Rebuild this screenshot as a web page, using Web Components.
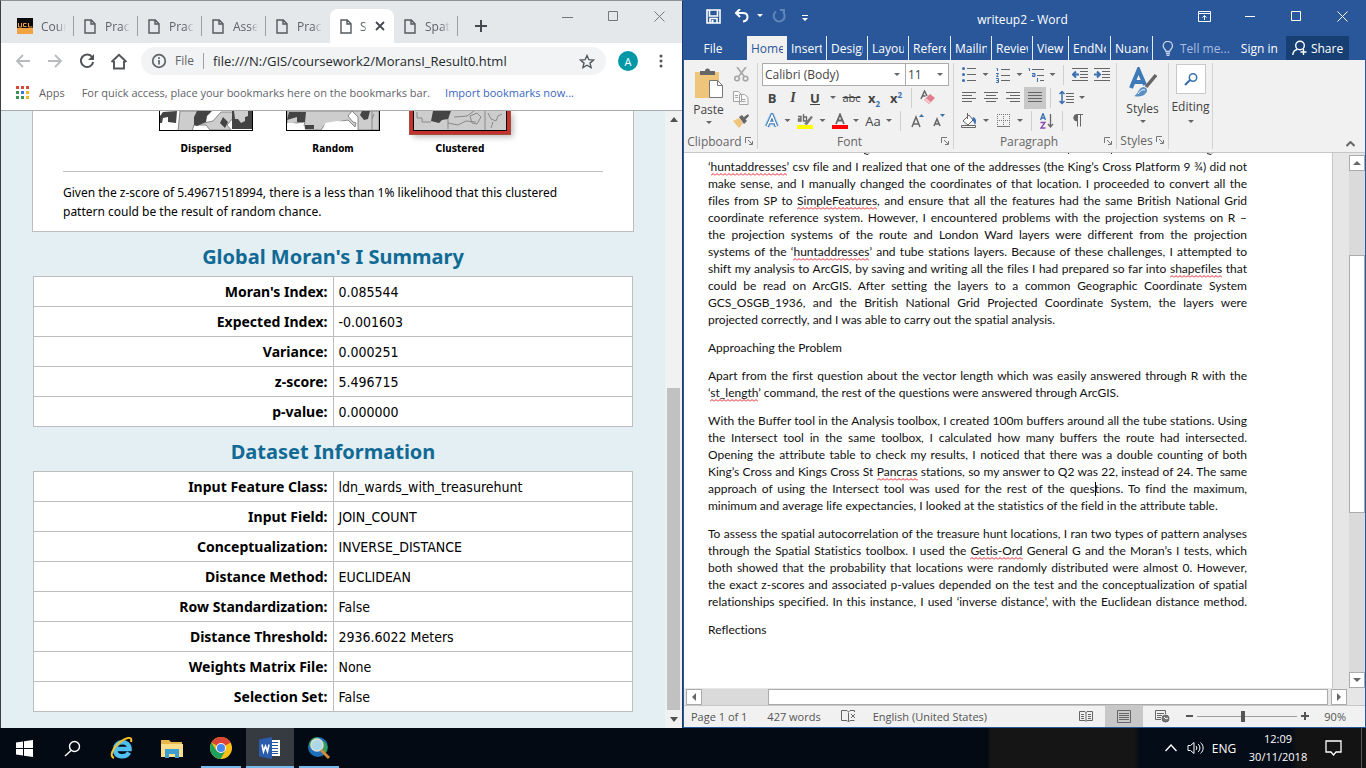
<!DOCTYPE html>
<html lang="en">
<head>
<meta charset="utf-8">
<title>Desktop</title>
<style>
html,body{margin:0;height:100%}
body{overflow:hidden;font-family:"Open Sans","Noto Sans",sans-serif;font-size:12px}
</style>
</head>
<body>
<desktop-screen>
  <browser-window slot="window"></browser-window>
  <word-window slot="window"></word-window>
  <task-bar slot="bar"></task-bar>
</desktop-screen>
<script>
const BASE = `*{box-sizing:border-box}button{font:inherit;color:inherit;background:none;border:0;padding:0;margin:0;display:flex;align-items:center;justify-content:center}svg{display:block;flex:none}a{color:inherit;text-decoration:none}p{margin:0}`;
function define(name, css, html){
  const t = document.createElement('template');
  t.innerHTML = `<style>${BASE}${css}</style>${html}`;
  customElements.define(name, class extends HTMLElement{
    constructor(){ super(); this.attachShadow({mode:'open'}).append(t.content.cloneNode(true)); }
  });
}

define('desktop-screen', `
:host{display:flex;flex-direction:column;height:100vh;background:#04090f}
.windows{display:flex;flex:1;min-height:0}
::slotted([slot=window]){flex:1;min-width:0}
`, `<div class="windows"><slot name="window"></slot></div><slot name="bar"></slot>`);

/* ---------- browser ---------- */
define('browser-tab', `
:host{display:block;flex:0 1 64px;min-width:0;height:34px;color:#5f6368}
button{width:100%;height:100%;padding:0 7px 0 10px;gap:9px;justify-content:flex-start;border-right:1px solid #9b9fa3;height:20px;margin-top:7px}
.t{overflow:hidden;white-space:nowrap;flex:1;text-align:left;mask-image:linear-gradient(90deg,#000 65%,transparent)}
.x{display:none}
:host([first]) button{padding-left:7px;gap:8px}
:host([noline]) button{border-color:transparent}
:host([active]){background:#fff;border-radius:8px 8px 0 0}
:host([active]) button{border-color:transparent;gap:8px}
:host([active]) .x{display:block;margin-right:1px}
`, `<button role="tab"><slot name="icon"><svg width="12" height="15" viewBox="0 0 12 15" fill="none" stroke="#55595d" stroke-width="1.4"><path d="M1 1h6.2L11 4.8V14H1zM7 1v4h4"/></svg></slot><span class="t"><slot></slot></span><svg class="x" width="10" height="10" viewBox="0 0 10 10" stroke="#45494d" stroke-width="1.8"><path d="M1 1l8 8M9 1l-8 8"/></svg></button>`);

define('browser-toolbar', `
:host{display:flex;flex-direction:column;background:#fff}
.bar{display:flex;align-items:center;height:36px;padding:0 12px 0 6px}
.bar button{width:32px;height:28px}
.box{display:flex;align-items:center;flex:1;height:28px;border-radius:14px;background:#f1f3f4;margin:0 12px 0 6px;padding:0 9px 0 10px;color:#5f6368}
.box span{padding:0 9px 0 8px;border-right:1px solid #9aa0a6;line-height:16px}
.box input{flex:1;min-width:0;border:0;background:none;outline:0;font:13px "Open Sans",sans-serif;color:#26292c;padding:0 0 0 9px}
.box button{width:20px}
.bar .me{width:20px;height:20px;border-radius:50%;background:#0097a7;color:#fff;font-size:11px}
.bar .more{width:18px;margin-left:14px}
.marks{display:flex;align-items:center;height:32px;padding:0 0 4px 15px;color:#5f6368;border-bottom:1px solid #a9abad;white-space:nowrap;font-size:11px}
.marks button{gap:10px;margin-right:17px;font-size:11px}
.marks a{color:#3a67c4;margin-left:15px}
`, `<div class="bar">
<button aria-label="Back"><svg width="16" height="14" viewBox="0 0 16 14" fill="none" stroke="#b9bbbe" stroke-width="1.8"><path d="M15 7H2M8 1L2 7l6 6"/></svg></button>
<button aria-label="Forward"><svg width="16" height="14" viewBox="0 0 16 14" fill="none" stroke="#b9bbbe" stroke-width="1.8"><path d="M1 7h13M8 1l6 6-6 6"/></svg></button>
<button aria-label="Reload"><svg width="16" height="16" viewBox="0 0 16 16" fill="none" stroke="#505458" stroke-width="2"><path d="M13.2 4.2A6.2 6.2 0 1 0 14.2 9"/><path d="M15 1v6H9z" fill="#505458" stroke="none"/></svg></button>
<button aria-label="Home"><svg width="18" height="17" viewBox="0 0 18 17" fill="none" stroke="#505458" stroke-width="1.9"><path d="M1.5 9L9 1.8 16.500 9M4 8v7.500h10V8"/></svg></button>
<div class="box"><svg width="16" height="16" viewBox="0 0 16 16" fill="none" stroke="#5f6368" stroke-width="1.7"><circle cx="8" cy="8" r="6.300"/><path d="M8 7v4.500M8 4.200v1.700"/></svg><span>File</span><input aria-label="Address" value="file:///N:/GIS/coursework2/MoransI_Result0.html"><button aria-label="Bookmark"><svg width="16" height="15" viewBox="0 0 16 15" fill="none" stroke="#55595d" stroke-width="1.400"><path d="M8 1.500l1.900 4.200 4.600.4-3.500 3 1.100 4.500L8 11.200l-4.100 2.400L5 9.100l-3.500-3 4.600-.4z"/></svg></button></div>
<button class="me">A</button>
<button class="more" aria-label="Menu"><svg width="4" height="14" fill="#505458"><circle cx="2" cy="2" r="1.500"/><circle cx="2" cy="7" r="1.500"/><circle cx="2" cy="12" r="1.500"/></svg></button>
</div>
<div class="marks"><button><svg width="13" height="13"><g fill="#d8483b"><path d="M0 0h3v3H0zM5 0h3v3H5zM10 0h3v3h-3z"/></g><path d="M0 5h3v3H0zM0 10h3v3H0zM5 10h3v3H5z" fill="#3d9256"/><path d="M5 5h3v3H5z" fill="#3d78e0"/><path d="M10 5h3v3h-3zM10 10h3v3h-3z" fill="#f0b429"/></svg>Apps</button><span>For quick access, place your bookmarks here on the bookmarks bar.</span><a href="#">Import bookmarks now...</a></div>`);

define('pattern-map', `
:host{display:flex;flex-direction:column;align-items:center;width:127px}
.m{border:1px solid #000;border-top:0;height:20px;width:94px;overflow:hidden}
.frame{height:34px}
:host([hot]) .frame{height:23px;border:3px solid #c4322f;border-top:0;outline:1px solid #a5503c;clip-path:inset(0 -12px -12px -12px);box-shadow:3px 3px 6px #bbb;margin-bottom:11px}
b{font:bold 10px/14px "DejaVu Sans Condensed",sans-serif;margin-top:-3px}
`, `<div class="frame"><div class="m"><slot name="map"></slot></div></div><b><slot></slot></b>`);

define('report-table', `
:host{display:block;margin:0 1px}
h2{margin:0;text-align:center;font:bold 20px/48px "Noto Sans",sans-serif;color:#116a94;padding-top:1px;height:44px}
table{width:100%;border-collapse:collapse;background:#fff;table-layout:fixed}
td,th{border:1px solid #bdbdbd;height:30px;padding:0 5px;font-size:14px;line-height:20px}
th{text-align:right;font-weight:bold;font-family:"Noto Sans",sans-serif}
td{font-family:"DejaVu Sans Condensed",sans-serif}
`, `<h2></h2><table><tbody></tbody></table>`);

define('report-page', `
:host{display:flex;flex:1;min-height:0;background:#e4eff4;overflow:hidden}
.page{flex:1;min-width:0;padding:0 31px}
.card{background:#fff;border:1px solid #bdbdbd;border-top:0;height:121px;padding:0 30px}
.maps{display:flex;justify-content:center;height:61px;border-bottom:1px solid #c0c0c0}
.card p{padding-top:11px;font:12px/19px "Noto Sans",sans-serif;white-space:nowrap}
.sb{width:17px;flex:none;background:#f1f1f1;display:flex;flex-direction:column;align-items:center}
.sb button{height:17px;width:17px}
.thumb{width:13px;height:322px;background:#c1c1c1;margin-top:260px}
.gap{flex:1}
`, `<div class="page"><div class="card"><div class="maps">
<pattern-map><svg slot="map" width="92" height="19"><path fill="#fff" d="M0 0h92v19H0z"/><path fill="#cdcdcd" stroke="#888" d="M20 0h22l-6 8 8 4 9-2 8-9h13v5l-7 8 4 5H50l-4-5H34l-2 6H18z"/><path fill="#444" d="M3 1l14-1-1 12-8-1v-5l-5 1-1 5H0V5zM37 0h15l-5 5-1 6-9 4-3-1V6zM63 6l5 5-3 6-5-5zM72 0h20v18H72z"/><path fill="#cdcdcd" d="M74 0h14v5l-3 1v4l-4 2-3-4h-3z"/></svg>Dispersed</pattern-map>
<pattern-map><svg slot="map" width="92" height="19"><path fill="#cdcdcd" stroke="#888" d="M0 0h92v19H71V6l-6-6-4 5 5 6 3 1-1 4-7-7-6 1-7 4-10-1-4 6H16l2-8-18 2z"/><path fill="#fff" d="M0 12h7l5 2 5 1 1 4H0zM38 12l12-2 12 1v8H36z"/><path fill="#444" d="M2 1h17l-1 10h-8V6L0 9zM18 14h9v4h-9zM75 0h8l-2 8-4 1-4-5z"/><path fill="none" stroke="#888" d="M85 0v19M87 3l-2 5"/></svg>Random</pattern-map>
<pattern-map hot><svg slot="map" width="92" height="19"><path fill="#cdcdcd" d="M0 0h92v19H0z"/><path fill="none" stroke="#898989" d="M3 1v6h5v4h9M34 18V0M34 12l10 2 8-4 10 1M71 0v19M40 6l13-1 7-5M63 2l4 4-4 7-5-1-2-7zM74 2l3 6 5 2 2-5 4-2M79 11l-2 6"/><path fill="#444" d="M19 0h18l-3 8-6 1-3 3-8-2z"/></svg>Clustered</pattern-map>
</div><p>Given the z-score of 5.49671518994, there is a less than 1% likelihood that this clustered<br>pattern could be the result of random chance.</p></div>
<report-table data-title="Global Moran's I Summary" data-rows="Moran's Index:|0.085544;Expected Index:|-0.001603;Variance:|0.000251;z-score:|5.496715;p-value:|0.000000"></report-table>
<report-table data-title="Dataset Information" data-rows="Input Feature Class:|ldn_wards_with_treasurehunt;Input Field:|JOIN_COUNT;Conceptualization:|INVERSE_DISTANCE;Distance Method:|EUCLIDEAN;Row Standardization:|False;Distance Threshold:|2936.6022 Meters;Weights Matrix File:|None;Selection Set:|False"></report-table>
</div><div class="sb"><button aria-label="Scroll up"><svg width="8" height="5" fill="#505050"><path d="M0 5l4-5 4 5z"/></svg></button><div class="thumb"></div><div class="gap"></div><button aria-label="Scroll down"><svg width="8" height="5" fill="#505050"><path d="M0 0h8L4 5z"/></svg></button></div>`);

define('browser-window', `
:host{display:flex;flex-direction:column;background:#fff;box-sizing:border-box;border:1px solid #3c4043;border-top-color:#8f9295;border-right:1px solid #1d3a6b;border-bottom:0}
.strip{display:flex;height:42px;background:#e5e8eb;padding:8px 0 0 9px}
.tabs{display:flex;flex:0 1 449px;min-width:0}
.new{width:40px;height:34px;margin-left:2px}
.ctl{display:flex;margin-left:auto;margin-top:-7px}
.ctl button{width:46px;height:28px}
`, `<div class="strip"><div class="tabs" role="tablist">
<browser-tab first><svg slot="icon" width="16" height="16"><path fill="#0a0a0a" d="M0 0h16v10H0z"/><path fill="#f2a344" d="M0 10h16v6H0z"/><path fill="none" stroke="#f2a344" d="M1.500 5v4h3V5M9.500 5.500h-3v3h3M11.500 5v4h4"/></svg>Cour</browser-tab>
<browser-tab>Prac</browser-tab><browser-tab>Prac</browser-tab><browser-tab>Asse</browser-tab><browser-tab noline>Prac</browser-tab><browser-tab active>S</browser-tab><browser-tab>Spat</browser-tab></div>
<button class="new" aria-label="New tab"><svg width="12" height="12" stroke="#45494d" stroke-width="2"><path d="M6 0v12M0 6h12"/></svg></button>
<div class="ctl"><button aria-label="Minimise"><svg width="11" height="11" stroke="#777"><path d="M0 6.500h11"/></svg></button><button aria-label="Maximise"><svg width="11" height="11" fill="none" stroke="#777"><path d="M.5.5h9v9h-9z"/></svg></button><button aria-label="Close"><svg width="11" height="11" stroke="#777"><path d="M.5.5l10 10M10.500.5l-10 10"/></svg></button></div></div>
<browser-toolbar></browser-toolbar><report-page></report-page>`);

/* ---------- word processor ---------- */
define('word-tab', `
:host{display:block;flex:0 1 var(--w,41px);min-width:0;height:24px;color:#fff}
button{width:100%;height:24px;justify-content:flex-start;padding:0 4px;border-right:1px solid #e6ecf5}
span{overflow:hidden;white-space:nowrap;flex:1;text-align:left}
:host([active]) button{background:#f1f1f1;color:#2a579a;border:0}
`, `<button role="tab"><span><slot></slot></span></button>`);

define('word-titlebar', `
:host{display:block;background:#2a579a;color:#fff;white-space:nowrap}
.top{display:grid;grid-template-columns:1fr auto 1fr;height:36px;align-items:center}
.top>span{margin-right:4px;padding-top:2px}
.qat{display:flex;padding-left:15px;margin-top:-4px}
.qat button,.ctl button{height:28px}
.ctl{display:flex;justify-content:flex-end;margin-top:-4px}
.ctl button{width:46px}
.tabs{display:flex;height:24px}
.file{width:63px;padding-right:5px}
.strip{display:flex;flex:0 1 407px;min-width:0}
.tell{gap:6px;color:#a9bde0;margin-left:8px}
.sign{margin-left:11px}
.share{background:#173f73;width:63px;gap:4px;margin:0 16px 0 auto}
`, `<div class="top"><div class="qat">
<button style="width:28px" aria-label="Save"><svg width="15" height="15" fill="none" stroke="#fff" stroke-width="1.600"><path d="M1 1h13v13H1zM3.500 1v6h8V1M4 14v-4.500h7V14"/><path d="M6.500 11v3" stroke-width="2"/></svg></button>
<button style="width:30px" aria-label="Undo"><svg width="16" height="14" fill="none" stroke="#fff" stroke-width="2"><path d="M6 0L2 4l4 4M2.500 4H9c6 0 6 8 0 8.500"/></svg></button>
<svg width="6" height="4" style="align-self:center" fill="#fff"><path d="M0 0h6L3 3z"/></svg>
<button style="width:32px" aria-label="Repeat"><svg width="14" height="14" fill="none" stroke="#6285bb" stroke-width="2"><path d="M4 2.500A5.500 5.500 0 1 0 11 3M8 1h4v4"/></svg></button>
<button style="width:20px" aria-label="Customise"><svg width="6" height="8" fill="#fff" style="margin-top:5px"><path d="M0 0h6v1H0zM0 3h6L3 6z"/></svg></button></div>
<span>writeup2 - Word</span>
<div class="ctl"><button aria-label="Ribbon options"><svg width="13" height="11" fill="none" stroke="#fff"><path d="M.5.5h12v10H.5zM.5 2.500h12M6.500 9V4.500M4.500 6.500l2-2 2 2"/></svg></button><button aria-label="Minimise"><svg width="11" height="11" stroke="#fff"><path d="M0 5.500h10"/></svg></button><button aria-label="Maximise"><svg width="11" height="11" fill="none" stroke="#fff"><path d="M.5.5h9v9h-9z"/></svg></button><button aria-label="Close"><svg width="11" height="11" stroke="#fff"><path d="M.5.5l10 10M10.500.5l-10 10"/></svg></button></div></div>
<div class="tabs"><button class="file">File</button><div class="strip" role="tablist">
<word-tab active style="--w:40px">Home</word-tab><word-tab style="--w:40px">Insert</word-tab><word-tab>Design</word-tab><word-tab>Layou</word-tab><word-tab style="--w:42px">Refere</word-tab><word-tab>Mailin</word-tab><word-tab>Review</word-tab><word-tab style="--w:36px">View</word-tab><word-tab style="--w:42px">EndNo</word-tab><word-tab style="--w:42px">Nuanc</word-tab></div>
<button class="tell"><svg width="12" height="15" fill="none" stroke="#c8d6ec" stroke-width="1.300"><path d="M4 10.500C4 8.500 1.200 7.800 1.200 5a4.500 4.500 0 0 1 9.300 0c0 2.800-2.800 3.500-2.800 5.500zM4 12.500h4M4.500 14.300h3"/></svg>Tell me...</button><button class="sign">Sign in</button><button class="share"><svg width="15" height="16" fill="none" stroke="#fff" stroke-width="1.400"><circle cx="8" cy="5.500" r="4.300"/><path d="M.8 15c.2-3 2-5 4.500-5.500M11.500 9v6M8.500 12h6"/></svg>Share</button></div>`);

define('ribbon-group', `
:host{display:grid;grid-template-rows:1fr 18px;border-right:1px solid #d2d2d2;height:86px;margin-top:3px;color:#444;box-sizing:border-box}
.foot{display:grid;grid-template-columns:1fr auto;align-items:center;color:#666;padding-right:4px;white-space:nowrap}
.foot span{text-align:center}
:host([plain]) .foot{visibility:hidden}
`, `<slot></slot><div class="foot"><span><slot name="label"></slot></span><svg width="8" height="8" fill="none" stroke="#777"><path d="M.5 6V.5H6M3 3l4 4M7.500 4v3.500H4"/></svg></div>`);

const DD = w => `<svg width="${w}" height="4" viewBox="0 0 ${w} 4"><path fill="#666" d="M${w/2-3} 0h6l-3 3z"/></svg>`;
const B = (w,label,inner,cls='') => `<button class="${cls}" style="width:${w}px" aria-label="${label}">${inner}</button>`;
const SEP = w => `<i class="sep" style="width:${w}px"></i>`;
const LINES = (d) => `<svg width="14" height="11" fill="none" stroke="#666" ><path d="${d}"/></svg>`;

define('word-ribbon', `
:host{display:flex;background:#f1f1f1;height:93px;border-bottom:1px solid #c6c6c6;color:#444;box-sizing:border-box}
.rows{display:grid;grid-template-rows:23px 23px 23px}
.row{display:flex;align-items:center}
.row button{height:22px}
.sep{display:block;height:20px;background:linear-gradient(#cfcfcf,#cfcfcf) center/1px 100% no-repeat}
.on{background:#c8c8c8}
select{appearance:none;height:23px;border:1px solid #ababab;border-radius:0;background:#fff url('data:image/svg+xml,<svg xmlns="http://www.w3.org/2000/svg" width="6" height="4"><path fill="%23666" d="M0 0h6L3 3z"/></svg>') right 5px center no-repeat;font:12px "Open Sans",sans-serif;color:#444;padding:0 2px}
select+select{margin-left:-1px}
.clip{display:flex}
.big{flex-direction:column;justify-content:flex-start;gap:3px;line-height:16px;font-size:12px}
.col{display:grid;grid-template-rows:23px 23px 23px;width:24px}
.glass{width:30px;height:30px;background:#fff;border:1px solid #c8c8c8;display:flex;align-items:center;justify-content:center}
.up{align-self:flex-end;margin:0 9px 5px auto;width:12px}
b,u,s{font-size:13px;font-style:normal;line-height:18px}
sub,sup{font-size:8px;color:#3a70b0;line-height:0}
`, `
<ribbon-group style="width:74px"><div class="clip"><button class="big" style="width:49px;padding:5px 0 0 0"><svg width="30" height="31"><path fill="#eec57a" d="M1 4h24v26H1z"/><path fill="#666" d="M6 7V3h5a2.500 2.500 0 0 1 5 0h5v4z"/><path fill="#fff" stroke="#777" d="M15.500 12.500h8l5 5v12h-13z"/><path fill="none" stroke="#777" d="M23.500 12.500v5h5"/></svg>Paste${DD(8)}</button>
<div class="col">${B(16,'Cut','<svg width="15" height="15" fill="none" stroke="#a5a5a5" stroke-width="1.600"><path d="M3 0l7 9M12 0L5 9"/><circle cx="3" cy="11.500" r="2.300"/><circle cx="11.500" cy="11.500" r="2.300"/></svg>')}${B(16,'Copy','<svg width="16" height="14" fill="#f8f8f8" stroke="#a5a5a5"><path d="M.5.5h5l3 3v7h-8zM6.500 3.500h5l3.500 3v7H6.500zM2 4.500h3M2 6.500h3M8.500 8.500h4M8.500 10.500h4"/></svg>')}${B(16,'Format painter','<svg width="16" height="14"><path fill="#eec57a" d="M0 7l6-3 4 5-4 5z"/><path fill="#666" d="M6 3l3-2 5 6-3 3zM11 3l4-3 1 2-4 4z"/></svg>')}</div></div><span slot="label">Clipboard</span></ribbon-group>
<ribbon-group style="width:196px"><div class="rows" style="padding-left:4px"><div class="row"><select aria-label="Font" style="width:144px"><option>Calibri (Body)</option></select><select aria-label="Font size" style="width:44px"><option>11</option></select></div>
<div class="row">${B(20,'Bold','<b>B</b>')}${B(22,'Italic','<i style="font:italic bold 14px Liberation Serif">I</i>')}${B(22,'Underline','<u><b>U</b></u>')}${DD(14)}${B(23,'Strikethrough','<s style="font-size:11px">abc</s>')}${B(22,'Subscript','<b>x<sub>2</sub></b>')}${B(22,'Superscript','<b>x<sup>2</sup></b>')}${SEP(8)}${B(24,'Clear formatting','<svg width="15" height="15"><path fill="none" stroke="#666" stroke-width="1.500" d="M1 9L4.500 1 7 6M2.500 6h3"/><path fill="#e07c8c" d="M4 10l6-6 5 4-6 6z"/><path fill="#f5c4cb" d="M4 10l2-2 5 4-2 2z"/></svg>')}</div>
<div class="row">${B(20,'Text effects','<svg width="16" height="16" fill="none"><path stroke="#b5d5f0" stroke-width="5.500" d="M3 13.500l5-11 4.500 11M5 9.500h5"/><path stroke="#3d78b4" stroke-width="3.500" d="M3 13.500l5-11 4.500 11M5 9.500h5"/><path stroke="#fff" stroke-width="1.500" d="M3 13.500l5-11 4.500 11M5 9.500h5"/></svg>')}${DD(11)}${B(24,'Highlight','<svg width="17" height="16"><path fill="#ff0" d="M0 12h16v4H0z"/><path fill="none" stroke="#666" stroke-width="1.300" d="M1 3.500h3v4.500H1.500V6H4M6.500 1v7h3V4h-3"/><path fill="#777" d="M7 11l7-8 2 1-6 8z"/></svg>')}${DD(11)}${B(23,'Font colour','<svg width="16" height="16"><path fill="red" d="M0 12h16v4H0z"/><path fill="none" stroke="#666" stroke-width="1.800" d="M4 11l4-9.500L12 11M5.500 7.500h5"/></svg>')}${DD(10)}${B(24,'Change case','<span style="font-size:13px">Aa</span>')}${DD(8)}${SEP(14)}${B(22,'Grow font','<svg width="14" height="14"><path fill="none" stroke="#666" stroke-width="1.500" d="M1 13L5 3l4 10M2.500 10h5"/><path fill="#3a70b0" d="M8 3l2.500-3L13 3z"/></svg>')}${B(20,'Shrink font','<svg width="13" height="13"><path fill="none" stroke="#666" stroke-width="1.500" d="M1 12L4 5l3 7M2.500 10h3"/><path fill="#3a70b0" d="M7 0h5L9.500 3z"/></svg>')}</div></div><span slot="label">Font</span></ribbon-group>
<ribbon-group style="width:163px"><div class="rows" style="padding-left:4px"><div class="row">${B(21,'Bullets','<svg width="14" height="15"><g fill="#3a70b0"><circle cx="1.500" cy="1.500" r="1.500"/><circle cx="1.500" cy="7.500" r="1.500"/><circle cx="1.500" cy="13.500" r="1.500"/></g><path stroke="#666" d="M5 1.500h9M5 7.500h9M5 13.500h9"/></svg>')}${DD(13)}${B(22,'Numbering','<svg width="14" height="16"><path fill="none" stroke="#3a70b0" d="M.5 1.500h1V4M0 6.500h2.500L.5 9.500h2M0 11.500h2.500v4H0M.5 13.500h2"/><path stroke="#666" d="M5 2.500h9M5 8.500h9M5 13.500h9"/></svg>')}${DD(11)}${B(22,'Multilevel list','<svg width="17" height="16"><path fill="none" stroke="#3a70b0" d="M.5 1.500h1V4M4 6.500h3v3H4.500V8H7M9.500 11v4"/><path stroke="#666" d="M4 2.500h12M9 8.500h7M12 13.500h4"/></svg>')}${DD(11)}${SEP(11)}${B(22,'Decrease indent','<svg width="16" height="13" fill="none"><path stroke="#666" d="M0 .5h16M8 3.500h8M8 6.500h8M8 9.500h8M0 12.500h16"/><path stroke="#3a70b0" stroke-width="2" d="M7 6.500H1M4 3.500l-3 3 3 3"/></svg>')}${B(22,'Increase indent','<svg width="16" height="13" fill="none"><path stroke="#666" d="M0 .5h16M8 3.500h8M8 6.500h8M8 9.500h8M0 12.500h16"/><path stroke="#3a70b0" stroke-width="2" d="M0 6.500h6M3 3.500l3 3-3 3"/></svg>')}</div>
<div class="row">${B(22,'Align left',LINES('M0 .5h14M0 3.500h10M0 6.500h14M0 9.500h10'))}${B(22,'Centre',LINES('M0 .5h14M2 3.500h10M0 6.500h14M2 9.500h10'))}${B(22,'Align right',LINES('M0 .5h14M4 3.500h10M0 6.500h14M4 9.500h10'))}${B(22,'Justify',LINES('M0 .5h14M0 3.500h14M0 6.500h14M0 9.500h14'),'on')}${SEP(9)}${B(22,'Line spacing','<svg width="15" height="15" fill="none"><path stroke="#3a70b0" stroke-width="1.500" d="M3 1v13M.5 4L3 1.500 5.500 4M.5 11L3 13.500 5.500 11"/><path stroke="#666" d="M7 3.500h8M7 6.500h8M7 9.500h8M7 12.500h8"/></svg>')}${DD(10)}</div>
<div class="row">${B(22,'Shading','<svg width="17" height="15" fill="none" stroke="#666"><path d="M.5 12.500h14v2H.5z"/><path fill="#fff" d="M2 8l6-6 4 5-5 5zM6.500 0v6"/><path fill="#3a70b0" stroke="none" d="M12 4c3 1 4 4 2 8-1-2-1-4-3-5z"/></svg>')}${DD(12)}${B(22,'Borders','<svg width="13" height="13" fill="none" stroke="#777"><path stroke-dasharray="1 1" d="M.5 0v12M12.500 0v12M0 .5h13M6.500 0v12M0 6.500h13"/><path d="M0 12.500h13"/></svg>')}${DD(12)}${SEP(10)}${B(22,'Sort','<svg width="14" height="16" fill="none"><path stroke="#3a70b0" stroke-width="1.300" d="M.5 7L3 .5 5.500 7M1.500 5h3"/><path stroke="#8a4bb0" stroke-width="1.300" d="M.5 9.500h4.500L1 15h4.500"/><path stroke="#666" stroke-width="1.300" d="M10.500 1v13M8 11l2.500 3L13 11"/></svg>')}${SEP(9)}${B(22,'Show marks','<svg width="10" height="13" fill="none" stroke="#666"><path d="M4.500 0v12.500M7.500 0v12.500M3 .5h7"/><path fill="#666" d="M4 .5a3 3 0 0 0 0 6.500z"/></svg>')}</div></div><span slot="label">Paragraph</span></ribbon-group>
<ribbon-group style="width:52px"><button class="big" style="padding-top:4px"><svg width="28" height="31" fill="none"><path stroke="#3f7ab8" stroke-width="4" d="M2 21L9.500 3 16 18M5 15h9"/><path stroke="#666" stroke-width="3.500" d="M27 8l-10 12"/><path fill="#5a8fc4" d="M5 29c4-1 4-8 9-9 4 0 5 4 3 6-3 4-8 4-12 3z"/><path stroke="#fff" d="M9 27c2-3 4-5 7-4"/></svg>Styles${DD(8)}</button><span slot="label">Styles</span></ribbon-group>
<ribbon-group plain style="width:44px"><button class="big" style="padding-top:1px;gap:5px"><span class="glass"><svg width="14" height="13" fill="none" stroke="#3a70b0" stroke-width="1.500"><circle cx="9" cy="4.500" r="3.700"/><path stroke-width="2.200" d="M6 7l-5 5"/></svg></span>Editing${DD(8)}</button></ribbon-group>
<button class="up" aria-label="Collapse ribbon"><svg width="9" height="6" fill="none" stroke="#666" stroke-width="2"><path d="M.5 5l4-4 4 4"/></svg></button>`);

define('spelling-mark', `:host{padding-bottom:2px;background:url('data:image/svg+xml,<svg xmlns="http://www.w3.org/2000/svg" width="4" height="3"><path fill="none" stroke="%23e8202a" d="M0 2.500L2 .5 4 2.500"/></svg>') left bottom repeat-x}`, `<slot></slot>`);
define('doc-para', `
:host{display:block;margin-bottom:11px;font:12px/17px Lato,sans-serif;font-variant-ligatures:none;color:#111}
::slotted(span){display:block;text-align:justify;text-align-last:justify;white-space:nowrap}
::slotted(span:last-child){text-align-last:left}
:host([full]) ::slotted(span:last-child){text-align-last:justify}
`, `<slot></slot>`);

define('word-document', `
:host{display:grid;grid-template-columns:1fr 32px;grid-template-rows:1fr 17px;flex:1;min-height:0;background:#e6e6e6}
.sheet{background:#fff;border-right:1px solid #c6c6c6;padding:0 85px 0 24px;overflow:hidden}
.cut{display:block;height:5px;width:100%}
.caret{display:inline-block;width:1px;height:14px;background:#000;margin-right:-1px;vertical-align:-3px}
.v{display:flex;flex-direction:column;padding:2px 0 0 16px}
.v button,.h button{width:16px;height:16px;background:#fff;border:1px solid #ababab;flex:none}
.track{background:#dadada;flex:1;padding-top:84px;display:flex}
.bar{background:#fff;border:1px solid #ababab}
.track .bar{height:258px;width:100%}
.h{display:flex;grid-column:span 2;padding:0 18px 0 2px;align-items:center;height:17px}
.h .t{flex:1;background:#dadada;padding-left:66px;display:flex;margin-right:3px}
.h .bar{height:16px;width:100%}
`, `<div class="sheet"><svg class="cut" viewBox="0 0 539 5" preserveAspectRatio="none" fill="none" stroke="#222"><path d="M156 .5l4 1 1-1M361 0l-1 1M404 0l-1 1M499 .5l4 1 1-1"/></svg>
<doc-para><span>‘<spelling-mark>huntaddresses</spelling-mark>’ csv file and I realized that one of the addresses (the King’s Cross Platform 9 ¾) did not</span>
<span>make sense, and I manually changed the coordinates of that location. I proceeded to convert all the</span>
<span>files from SP to <spelling-mark>SimpleFeatures</spelling-mark>, and ensure that all the features had the same British National Grid</span>
<span>coordinate reference system. However, I encountered problems with the projection systems on R –</span>
<span>the projection systems of the route and London Ward layers were different from the projection</span>
<span>systems of the ‘<spelling-mark>huntaddresses</spelling-mark>’ and tube stations layers. Because of these challenges, I attempted to</span>
<span>shift my analysis to ArcGIS, by saving and writing all the files I had prepared so far into <spelling-mark>shapefiles</spelling-mark> that</span>
<span>could be read on ArcGIS. After setting the layers to a common Geographic Coordinate System</span>
<span>GCS_OSGB_1936, and the British National Grid Projected Coordinate System, the layers were</span>
<span>projected correctly, and I was able to carry out the spatial analysis.</span></doc-para>
<doc-para><span>Approaching the Problem</span></doc-para>
<doc-para><span>Apart from the first question about the vector length which was easily answered through R with the</span>
<span>‘<spelling-mark>st_length</spelling-mark>’ command, the rest of the questions were answered through ArcGIS.</span></doc-para>
<doc-para><span>With the Buffer tool in the Analysis toolbox, I created 100m buffers around all the tube stations. Using</span>
<span>the Intersect tool in the same toolbox, I calculated how many buffers the route had intersected.</span>
<span>Opening the attribute table to check my results, I noticed that there was a double counting of both</span>
<span>King’s Cross and Kings Cross St <spelling-mark>Pancras</spelling-mark> stations, so my answer to Q2 was 22, instead of 24. The same</span>
<span>approach of using the Intersect tool was used for the rest of the ques<i class="caret"></i>tions. To find the maximum,</span>
<span>minimum and average life expectancies, I looked at the statistics of the field in the attribute table.</span></doc-para>
<doc-para full><span>To assess the spatial autocorrelation of the treasure hunt locations, I ran two types of pattern analyses</span>
<span>through the Spatial Statistics toolbox. I used the <spelling-mark>Getis-Ord</spelling-mark> General G and the Moran’s I tests, which</span>
<span>both showed that the probability that locations were randomly distributed were almost 0. However,</span>
<span>the exact z-scores and associated p-values depended on the test and the conceptualization of spatial</span>
<span>relationships specified. In this instance, I used ‘inverse distance’, with the Euclidean distance method.</span></doc-para>
<doc-para><span>Reflections</span></doc-para></div>
<div class="v"><button aria-label="Scroll up"><svg width="8" height="4" fill="#666"><path d="M0 4l4-4 4 4z"/></svg></button><div class="track"><div class="bar"></div></div><button aria-label="Scroll down"><svg width="8" height="4" fill="#666"><path d="M0 0h8L4 4z"/></svg></button></div>
<div class="h"><button aria-label="Scroll left"><svg width="4" height="8" fill="#666"><path d="M4 0L0 4l4 4z"/></svg></button><div class="t"><div class="bar"></div></div><button aria-label="Scroll right"><svg width="4" height="8" fill="#666"><path d="M0 0l4 4-4 4z"/></svg></button></div>`);

define('word-status', `
:host{display:flex;align-items:center;height:22px;box-sizing:border-box;background:#f1f1f1;border-top:1px solid #c6c6c6;color:#555;padding:0 19px 1px 7px;white-space:nowrap;font-size:11px}
.views{display:flex;margin-left:auto}
.views button{width:38px;height:21px}
.views .on{background:#c8c8c8}
.z{width:14px;height:16px}
input{appearance:none;width:100px;height:16px;margin:0 1px;background:linear-gradient(#a0a0a0,#a0a0a0) center/100% 1px no-repeat}
input::-webkit-slider-thumb{appearance:none;width:4px;height:11px;background:#555}
`, `<button>Page 1 of 1</button><button style="margin-left:20px">427 words</button><button style="margin-left:20px" aria-label="Proofing"><svg width="15" height="13" fill="none" stroke="#666"><path d="M7.500 2.500v9M7.500 2L6 .5H.5v10H6l1.500 1.500L9 10.500h4.500M7.500 2L9 .5h4.500V2M10 4l4 4M14 4l-4 4"/></svg></button><button style="margin-left:17px">English (United States)</button>
<div class="views"><button aria-label="Read mode"><svg width="14" height="13" fill="none" stroke="#666"><path d="M.5 1.500H6l1 1 1-1h5.500v9H8l-1 1-1-1H.5zM7 2v9M2 4.500h3M2 6.500h3M2 8.500h3M9 4.500h3M9 6.500h3M9 8.500h3"/></svg></button><button class="on" aria-label="Print layout"><svg width="14" height="13" fill="none" stroke="#666"><path d="M.5.5h13v12H.5zM2 3.500h10M2 5.500h10M2 7.500h10M2 9.500h10"/></svg></button><button aria-label="Web layout"><svg width="15" height="13" fill="none" stroke="#666"><path d="M10.500 4V.5H.5v9H6M2 3.500h7M2 5.500h5M2 7.500h4"/><circle cx="10.500" cy="8.500" r="3.500" fill="#777"/><path stroke="#fff" d="M9 7l2 2 2-1"/></svg></button></div>
<button class="z" style="margin-left:1px" aria-label="Zoom out"><svg width="7" height="2"><path fill="#555" d="M0 0h7v2H0z"/></svg></button><input type="range" aria-label="Zoom" min="0" max="100" value="45"><button class="z" aria-label="Zoom in"><svg width="8" height="8"><path fill="#555" d="M3 0h2v3h3v2H5v3H3V5H0V3h3z"/></svg></button><button style="margin-left:12px">90%</button>`);

define('word-window', `
:host{display:flex;flex-direction:column;box-sizing:border-box;border:solid #2a579a;border-width:0 1px 1px 1px}
`, `<word-titlebar></word-titlebar><word-ribbon></word-ribbon><word-document></word-document><word-status></word-status>`);

/* ---------- taskbar ---------- */
define('task-bar', `
:host{display:flex;height:40px;color:#fff;background:linear-gradient(90deg,#030a14 0 72.3%,#151515 72.5% 83%,#040c18 83.500% 94.500%,#131313 95% 100%);white-space:nowrap}
button{height:40px;width:48px}
.app{width:50px}
.run{box-shadow:inset 0 -2px #76b9ed;width:40px;margin:0 5px}
.act{background:#363b41;box-shadow:inset 0 -2px #76b9ed;width:48px}
.tray{display:flex;margin-left:auto;align-items:center}
time{display:block;text-align:center;line-height:18px;width:74px;font-size:11px;margin-right:3px}
.end{width:4px;border-left:1px solid #555}
`, `<button aria-label="Start"><svg width="17" height="17" fill="#fff"><path d="M0 2.500l7-1V8H0zM8 1.300L17 0v8H8zM0 9h7v6.500l-7-1zM8 9h9v8l-9-1.300z"/></svg></button>
<button aria-label="Search"><svg width="17" height="17" fill="none" stroke="#fff" stroke-width="1.400"><circle cx="10.500" cy="6.500" r="5"/><path d="M7 10.500L1 16"/></svg></button>
<button class="app" style="width:52px" aria-label="Internet Explorer"><svg width="24" height="24" fill="none"><path stroke="#4fc0f0" stroke-width="4.500" d="M5 13h14.500c0-9-14-9-14.500 0 0 9 11 9 14 3.500"/><path stroke="#f5c32c" stroke-width="2" d="M4 22c-5-2-1-10 5-15s14-8 12-1"/></svg></button>
<button class="app" style="width:47px" aria-label="File Explorer"><svg width="22" height="19"><path fill="#e8b64a" d="M0 1h8l2 2h11v3H0z"/><path fill="#fbdf8d" d="M0 5h22v13H0z"/><path fill="#3f9ed0" d="M4 10h14v9h-4v-4H8v4H4z"/></svg></button>
<button class="run" style="margin-left:6px" aria-label="Chrome"><svg width="22" height="22" viewBox="0 0 22 22"><circle cx="11" cy="11" r="11" fill="#fbc116"/><path fill="#dc4437" d="M11 11L1.500 5.500A11 11 0 0 1 20.500 5.500z"/><path fill="#1fa15d" d="M1.500 5.500A11 11 0 0 0 10.500 22l5-8.500L11 16 6 13z"/><path fill="#dc4437" d="M11 6h9.800L20 4.500 11 4z"/><circle cx="11" cy="11" r="5" fill="#f4f4f4"/><circle cx="11" cy="11" r="4" fill="#4787f0"/></svg></button>
<button class="act" aria-label="Word"><svg width="22" height="22"><path fill="#fff" d="M12 3h9v16h-9z"/><path stroke="#2a579a" d="M13 5.500h6M13 8.500h6M13 11.500h6M13 14.500h6M13 16.500h6"/><path fill="#2a5cad" d="M0 2.500L13 0v22L0 19.500z"/><path fill="none" stroke="#fff" stroke-width="1.600" d="M3 7.500l1.500 7L6.500 9l2 5.500 1.500-7"/></svg></button>
<button class="run" aria-label="ArcMap"><svg width="24" height="24" fill="none"><circle cx="11" cy="11" r="10" fill="#1d70b8"/><path fill="#35a050" d="M3 5c4-5 9-4 9-2s-4 4-5 7-4 1-5-1zM15 5c4 0 6 5 5 9s-4 3-4 0-4-5-1-9z"/><circle cx="10" cy="9" r="6" fill="#c4e6f0" fill-opacity=".85" stroke="#ddd" stroke-width="1.500"/><path stroke="#d08a3a" stroke-width="3" d="M14 14l8 8"/></svg></button>
<div class="tray"><button style="width:24px" aria-label="Hidden icons"><svg width="12" height="8" fill="none" stroke="#fff" stroke-width="1.400"><path d="M.5 7L6 1l5.500 6"/></svg></button><button style="width:24px" aria-label="Volume"><svg width="17" height="14" fill="none" stroke="#fff"><path d="M1 4.500h2.500L7 1.500v11L3.500 9.500H1zM9 5c1 1 1 3 0 4M11 3c2.500 2 2.500 6 0 8M13.500 1.500c3.500 3 3.500 8 0 11"/></svg></button><button style="width:34px">ENG</button><time>12:09<br>30/11/2018</time><button style="width:30px" aria-label="Notifications"><svg width="17" height="16" fill="none" stroke="#fff" stroke-width="1.300"><path d="M1 1h15v11h-5l-2.500 3L6 12H1z"/></svg></button><button class="end" style="width:5px;margin-left:13px" aria-label="Show desktop"></button></div>`);

document.querySelectorAll('browser-window').forEach(w=>{
  const page = w.shadowRoot.querySelector('report-page').shadowRoot;
  page.querySelectorAll('report-table').forEach(t=>{
    t.shadowRoot.querySelector('h2').textContent = t.dataset.title;
    const body = t.shadowRoot.querySelector('tbody');
    t.dataset.rows.split(';').forEach(r=>{
      const [k,v] = r.split('|');
      const row = body.insertRow(), th = document.createElement('th');
      th.scope = 'row'; th.textContent = k; row.append(th);
      row.insertCell().textContent = v;
    });
  });
});
</script>
</body>
</html>
